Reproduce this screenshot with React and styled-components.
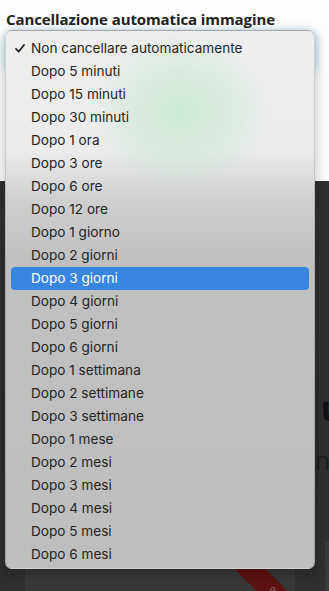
import React from 'react';
import styled, { createGlobalStyle } from 'styled-components';

const options = [
  'Non cancellare automaticamente',
  'Dopo 5 minuti',
  'Dopo 15 minuti',
  'Dopo 30 minuti',
  'Dopo 1 ora',
  'Dopo 3 ore',
  'Dopo 6 ore',
  'Dopo 12 ore',
  'Dopo 1 giorno',
  'Dopo 2 giorni',
  'Dopo 3 giorni',
  'Dopo 4 giorni',
  'Dopo 5 giorni',
  'Dopo 6 giorni',
  'Dopo 1 settimana',
  'Dopo 2 settimane',
  'Dopo 3 settimane',
  'Dopo 1 mese',
  'Dopo 2 mesi',
  'Dopo 3 mesi',
  'Dopo 4 mesi',
  'Dopo 5 mesi',
  'Dopo 6 mesi',
];

const GlobalStyle = createGlobalStyle`
  html, body {
    margin: 0;
    padding: 0;
    background: #2f2f2f;
    overflow: hidden;
  }
`;

const Page = styled.div`
  position: relative;
  width: 329px;
  height: 591px;
  overflow: hidden;
  display: flex;
  flex-direction: column;
`;

const Settings = styled.section`
  background: #fdfdfd;
  height: 181px;
  padding: 10px 0 0 6px;
  box-sizing: border-box;
`;

const Heading = styled.h3`
  margin: 0;
  font-family: 'Open Sans', 'Noto Sans', sans-serif;
  font-weight: 700;
  font-size: 15px;
  line-height: 18px;
  color: #222;
  letter-spacing: -0.1px;
`;

const SelectBox = styled.div`
  margin-top: 4px;
  width: 309px;
  height: 40px;
  border-radius: 7px;
  box-shadow: 0 0 6px 2px rgba(120, 190, 230, 0.45);
`;

const Dark = styled.section`
  flex: 1;
  background: #2f2f2f;
  position: relative;
  display: flex;
  flex-direction: column;
  align-items: flex-end;
`;

const BigText = styled.div`
  font-family: 'Open Sans', sans-serif;
  font-weight: 700;
  font-size: 34px;
  color: #111;
  margin-top: ${({ top }) => top}px;
  margin-right: -14px;
  line-height: 1;
`;

const SubText = styled.div`
  font-family: 'Open Sans', sans-serif;
  font-size: 26px;
  color: #1c1c1c;
  margin-top: 22px;
  margin-right: -8px;
  line-height: 1;
`;

const Card = styled.div`
  position: absolute;
  left: 25px;
  right: 34px;
  top: 380px;
  bottom: -20px;
  background: #383838;
  overflow: hidden;
`;

const SideStrip = styled.div`
  position: absolute;
  right: 0;
  width: 4px;
  top: 360px;
  bottom: 0;
  background: #3a3a3a;
`;

const Ribbon = styled.div`
  position: absolute;
  right: 0px;
  bottom: 2px;
  width: 120px;
  height: 22px;
  background: #5c1212;
  color: #8a6b6b;
  font-family: 'Open Sans', sans-serif;
  font-size: 13px;
  line-height: 22px;
  text-align: center;
  transform: translate(48px, 4px) rotate(45deg);
`;

const Menu = styled.div`
  position: absolute;
  left: 5px;
  top: 30px;
  width: 310px;
  height: 539px;
  box-sizing: border-box;
  padding: 6px 5px;
  border-radius: 7px;
  border: 1px solid rgba(0, 0, 0, 0.12);
  background:
    radial-gradient(ellipse 90px 80px at 175px 80px, rgba(190, 232, 205, 0.75), rgba(210, 235, 220, 0) 100%),
    linear-gradient(to bottom, #eeeeee 0px, #ebebeb 120px, #cfcfcf 170px, #c0c0c0 230px, #bebebe 100%);
  box-shadow: 0 4px 14px rgba(0, 0, 0, 0.25);
  display: flex;
  flex-direction: column;
`;

const Item = styled.div`
  position: relative;
  height: 23px;
  line-height: 23px;
  padding-left: 20px;
  border-radius: 4px;
  font-family: 'Inter', 'Liberation Sans', sans-serif;
  font-size: 13.6px;
  color: ${({ active }) => (active ? '#ffffff' : '#242424')};
  background: ${({ active }) => (active ? '#3a85e1' : 'transparent')};
`;

const Check = styled.svg`
  position: absolute;
  left: 4px;
  top: 7px;
  width: 10px;
  height: 9px;
`;

export default function App() {
  return (
    <Page>
      <GlobalStyle />
      <Settings>
        <Heading>Cancellazione automatica immagine</Heading>
        <SelectBox />
      </Settings>
      <Dark>
        <BigText top={210}>u</BigText>
        <SubText>nl</SubText>
        <SideStrip />
        <Card>
          <Ribbon>% OFF</Ribbon>
        </Card>
      </Dark>
      <Menu>
        {options.map((label, i) => (
          <Item key={label} active={i === 10}>
            {i === 0 && (
              <Check viewBox="0 0 10 9">
                <path d="M1 4.8 L3.7 7.6 L9 1" fill="none" stroke="#242424" strokeWidth="1.7" strokeLinecap="round" strokeLinejoin="round" />
              </Check>
            )}
            {label}
          </Item>
        ))}
      </Menu>
    </Page>
  );
}
